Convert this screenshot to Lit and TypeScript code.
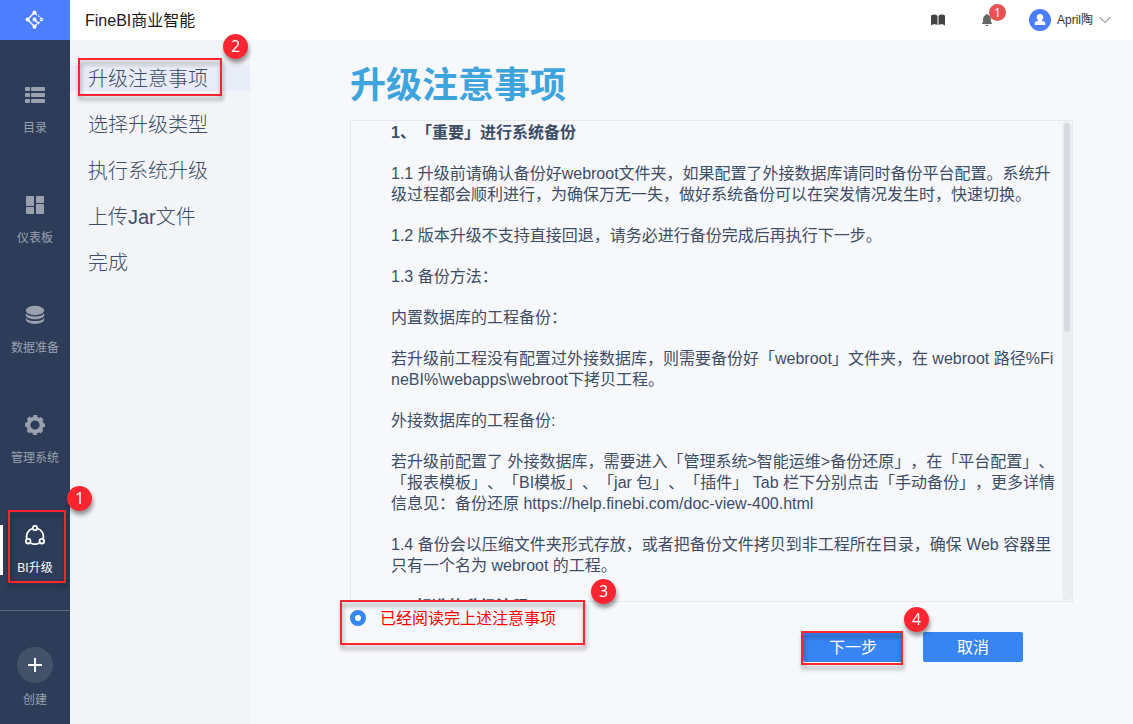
import { LitElement, html, css, svg, nothing } from "lit";
import { customElement, state } from "lit/decorators.js";

const icons = {
  list: svg`<g fill="currentColor"><rect x="0" y="2" width="5" height="4" rx="1"/><rect x="6" y="2" width="14" height="4" rx="1"/><rect x="0" y="8" width="5" height="4" rx="1"/><rect x="6" y="8" width="14" height="4" rx="1"/><rect x="0" y="14" width="5" height="4" rx="1"/><rect x="6" y="14" width="14" height="4" rx="1"/></g>`,
  board: svg`<g fill="currentColor"><rect x="1" y="1" width="8" height="10" rx="1"/><rect x="11" y="1" width="8" height="7" rx="1"/><rect x="1" y="12" width="8" height="7" rx="1"/><rect x="11" y="9" width="8" height="10" rx="1"/></g>`,
  database: svg`<g fill="currentColor"><ellipse cx="10" cy="5.5" rx="9.2" ry="4.7"/><path d="M.8 8.300c1.700 2.200 5 3.200 9.200 3.200s7.500-1 9.200-3.200v1.700c0 2.500-4.100 4.300-9.200 4.300S.8 12.500.8 10z"/><path d="M.8 12.900c1.700 2.200 5 3.200 9.200 3.200s7.500-1 9.200-3.200v1.700c0 2.500-4.100 4.300-9.200 4.300s-9.200-1.800-9.200-4.300z"/></g>`,
  gear: svg`<g fill="none" stroke="currentColor"><circle cx="10" cy="10" r="6.600" stroke-width="4"/><circle cx="10" cy="10" r="8.800" stroke-width="2.400" stroke-dasharray="4 2.910" stroke-dashoffset="2"/></g>`,
  cycle: svg`<g fill="none" stroke="currentColor" stroke-width="1.800"><circle cx="10" cy="3" r="2.200"/><circle cx="3.200" cy="16.200" r="2.300"/><circle cx="16.800" cy="16.200" r="2.300"/><path d="M7.600 3.500A8.400 8.400 0 0 0 1.800 13.500M12.400 3.500a8.400 8.400 0 0 1 5.800 10M6 18.200c2.600 1.200 5.400 1.200 8 0"/></g>`,
};

type Entry = { label: string; icon: keyof typeof icons };

const entries: Entry[] = [
  { label: "目录", icon: "list" },
  { label: "仪表板", icon: "board" },
  { label: "数据准备", icon: "database" },
  { label: "管理系统", icon: "gear" },
  { label: "BI升级", icon: "cycle" },
];

const steps = ["升级注意事项", "选择升级类型", "执行系统升级", "上传Jar文件", "完成"];

const notes = [
  "1.1 升级前请确认备份好webroot文件夹，如果配置了外接数据库请同时备份平台配置。系统升级过程都会顺利进行，为确保万无一失，做好系统备份可以在突发情况发生时，快速切换。",
  "1.2 版本升级不支持直接回退，请务必进行备份完成后再执行下一步。",
  "1.3 备份方法：",
  "内置数据库的工程备份：",
  "若升级前工程没有配置过外接数据库，则需要备份好「webroot」文件夹，在 webroot 路径%FineBI%\\webapps\\webroot下拷贝工程。",
  "外接数据库的工程备份:",
  "若升级前配置了 外接数据库，需要进入「管理系统>智能运维>备份还原」，在「平台配置」、「报表模板」、「BI模板」、「jar 包」、「插件」 Tab 栏下分别点击「手动备份」，更多详情信息见：备份还原 https://help.finebi.com/doc-view-400.html",
  "1.4 备份会以压缩文件夹形式存放，或者把备份文件拷贝到非工程所在目录，确保 Web 容器里只有一个名为 webroot 的工程。",
];

@customElement("step-mark")
export class StepMark extends LitElement {
  static properties = { n: { type: Number } };
  declare n: number;

  static styles = css`
    :host {
      position: absolute;
      box-sizing: border-box;
      border: 2px solid #fd2630;
      filter: drop-shadow(1px 4px 2px rgba(0, 0, 0, 0.4));
      pointer-events: none;
      z-index: 2;
    }
    .num {
      position: absolute;
      left: calc(100% + var(--mark-gap, 3px));
      bottom: calc(100% + var(--mark-rise, 1px));
      width: 25px;
      height: 25px;
      border-radius: 50%;
      background: #fd2630;
      color: #fff;
      font: 16px/25px "Noto Sans", "Liberation Sans", sans-serif;
      text-align: center;
    }
  `;

  render() {
    return html`<span class="num">${this.n}</span>`;
  }
}

@customElement("app-root")
export class AppRoot extends LitElement {
  @state() private entry = 4;
  @state() private step = 0;

  static styles = css`
    :host {
      display: flex;
      flex-direction: column;
      height: 100vh;
      min-height: 720px;
      background: #f7f8fb;
      color: #3d4d66;
      font: 400 16px/21px "Liberation Sans", "Noto Sans CJK SC", sans-serif;
      text-spacing-trim: space-all;
    }
    * {
      box-sizing: border-box;
    }
    button {
      border: 0;
      padding: 0;
      background: none;
      color: inherit;
      font: inherit;
      cursor: pointer;
    }
    svg {
      display: block;
      flex: none;
    }
    .top {
      display: flex;
      align-items: center;
      flex: none;
      height: 40px;
      background: #fff;
      color: #1a1a1a;
    }
    .logo {
      display: grid;
      place-items: center;
      width: 70px;
      height: 40px;
      background: #4b7fff;
    }
    .brand {
      flex: 1;
      padding-left: 15px;
    }
    .tools {
      display: flex;
      align-items: center;
      gap: 35px;
      padding-right: 22px;
      color: #555;
    }
    .bell {
      position: relative;
    }
    .count {
      position: absolute;
      left: 9px;
      bottom: 5px;
      width: 17px;
      height: 17px;
      border-radius: 50%;
      background: #e65251;
      color: #fff;
      font: 12px/17px "Noto Sans", sans-serif;
      text-align: center;
    }
    .user {
      display: flex;
      align-items: center;
      gap: 6px;
      font-size: 12px;
      color: #333;
    }
    .body {
      display: flex;
      flex: 1;
      min-height: 0;
    }
    .rail {
      flex: none;
      width: 70px;
      background: #2d3d59;
      color: #9aa1ae;
      font-size: 12px;
      line-height: 18px;
    }
    .entries {
      padding-bottom: 20px;
      border-bottom: 1px solid #5c687d;
    }
    .cell {
      position: relative;
      height: 110px;
      padding: 45px 0 15px;
    }
    .entry {
      display: flex;
      flex-direction: column;
      align-items: center;
      gap: 14px;
      width: 100%;
      height: 50px;
    }
    .entry.on {
      color: #fff;
      box-shadow: inset 3px 0 #fff;
    }
    .cell step-mark {
      inset: 30px 4px 7px 8px;
    }
    .create {
      display: flex;
      flex-direction: column;
      align-items: center;
      gap: 8px;
      width: 100%;
      padding-top: 36px;
    }
    .plus {
      display: grid;
      place-items: center;
      width: 36px;
      height: 36px;
      border-radius: 50%;
      background: #445269;
      color: #fff;
    }
    .steps {
      display: flex;
      flex-direction: column;
      gap: 20px;
      flex: none;
      width: 180px;
      margin: 0;
      padding: 25px 0 0;
      list-style: none;
      background: #f2f4f8;
      font-size: 20px;
      font-weight: 300;
      line-height: 24px;
    }
    .row {
      position: relative;
    }
    .row step-mark {
      inset: -7px 28px -5px 8px;
    }
    .step {
      display: block;
      width: 100%;
      height: 26px;
      padding: 2px 0 0 18px;
      text-align: left;
    }
    .step.on {
      background: #e8ecf6;
    }
    .main {
      display: flex;
      flex-direction: column;
      flex: 1;
      min-width: 0;
      padding: 22px 60px 62px 100px;
    }
    .title {
      margin: 0 0 10px;
      color: #3ea4dd;
      font-size: 36px;
      line-height: 48px;
      font-weight: 700;
    }
    .panel {
      display: flex;
      flex: 1;
      min-height: 0;
      border: 1px solid #e6e8ec;
    }
    .notes {
      flex: 1;
      overflow-y: auto;
      scrollbar-width: none;
      padding: 1px 0 0 40px;
      word-break: break-all;
    }
    .notes p,
    .notes h2 {
      margin: 0 0 20px;
      font-size: 16px;
    }
    .notes h2 {
      font-weight: 700;
    }
    .track {
      width: 10px;
      padding: 2px;
      border-radius: 5px;
      background: #ebedf1;
    }
    .thumb {
      height: 44%;
      border-radius: 3px;
      background: #d7dae0;
    }
    .agree {
      position: relative;
      display: flex;
      align-items: center;
      padding-top: 5px;
      color: #f00;
    }
    .agree label {
      padding: 1px 0 0 14px;
    }
    .agree input {
      appearance: none;
      width: 16px;
      height: 16px;
      margin: 0;
      border: 5px solid #3685f2;
      border-radius: 50%;
      background: #fff;
    }
    .agree step-mark {
      --mark-gap: 8px;
      --mark-rise: -2px;
      left: -10px;
      top: -2px;
      width: 245px;
      height: 45px;
    }
    .actions {
      display: flex;
      justify-content: flex-end;
      gap: 20px;
      padding: 3px 50px 0 0;
    }
    .act {
      position: relative;
    }
    .act step-mark {
      inset: -1px 0 -3px -2px;
    }
    .btn {
      display: block;
      width: 100px;
      height: 30px;
      border-radius: 2px;
      background: #3685f2;
      color: #fff;
    }
  `;

  render() {
    return html`
      <header class="top">
        <div class="logo">
          <svg width="20" height="20" viewBox="0 0 20 20" fill="none" stroke="#fff" stroke-width="1.500">
            <path d="M9.500 2.500 2.500 9.500M2.500 9.500l7 7M9.500 9.500 14 14M9.500 2.500 12 5M9.500 16.500 12 14" />
            <path d="M13 5.500 17 9.500 12.500 14" stroke-width="1.100" stroke-dasharray="2 1" />
            <g fill="#fff" stroke="none"><circle cx="9.500" cy="2.500" r="2" /><circle cx="2.500" cy="9.500" r="2" /><circle cx="9.500" cy="16.700" r="2" /><circle cx="9.500" cy="9.500" r="2" /></g>
            <circle cx="16.700" cy="9.500" r="1.300" stroke-width="1" />
          </svg>
        </div>
        <div class="brand">FineBI商业智能</div>
        <div class="tools">
          <button aria-label="帮助">
            <svg width="14" height="12" viewBox="0 0 14 12"><path fill="#444" d="M0 1.500C2 .3 5 .3 6.500 1.700V11C5 10 2 10 0 11.500zM14 1.500C12 .3 9 .3 7.500 1.700V11c1.500-1 4.500-1 6.500.5z" /></svg>
          </button>
          <button class="bell" aria-label="消息">
            <svg width="14" height="12" viewBox="0 0 14 12"><path fill="#666" d="M7 0c.6 0 1 .4 1 1 1.900.5 2.900 2 2.900 4v2.500L12.200 10H1.800l1.300-2.500V5c0-2 1-3.500 2.900-4 0-.6.4-1 1-1zM5.500 10.700h3c-.2.800-.8 1.300-1.500 1.300s-1.300-.5-1.500-1.300z" /></svg>
            <span class="count">1</span>
          </button>
          <button class="user">
            <svg width="22" height="22" viewBox="0 0 22 22"><circle cx="11" cy="11" r="11" fill="#4b7fff" /><path fill="#fff" d="M11 5c2 0 3.300 1.400 3.300 3.300 0 1.300-.6 2.500-1.500 3.100v.7c2 .4 3.500 1 3.500 2.400V16H5.700v-1.500c0-1.400 1.500-2 3.500-2.400v-.7c-.9-.6-1.500-1.800-1.500-3.100C7.700 6.400 9 5 11 5z" /></svg>
            <span>April陶</span>
            <svg width="12" height="8" viewBox="0 0 12 8" fill="none" stroke="#aaa89f" stroke-width="1.200"><path d="M.5 1 6 6.500 11.500 1" /></svg>
          </button>
        </div>
      </header>
      <div class="body">
        <nav class="rail">
          <div class="entries">
            ${entries.map(
              (e, i) => html`<div class="cell">
                <button class="entry ${i === this.entry ? "on" : ""}" @click=${() => (this.entry = i)}>
                  <svg width="20" height="20" viewBox="0 0 20 20">${icons[e.icon]}</svg>
                  <span>${e.label}</span>
                </button>
                ${i === 4 ? html`<step-mark .n=${1}></step-mark>` : nothing}
              </div>`
            )}
          </div>
          <button class="create">
            <span class="plus"><svg width="14" height="14" viewBox="0 0 14 14"><path d="M7 0v14M0 7h14" stroke="currentColor" stroke-width="2" /></svg></span>
            <span>创建</span>
          </button>
        </nav>
        <ol class="steps">
          ${steps.map(
            (s, i) => html`<li class="row">
              <button class="step ${i === this.step ? "on" : ""}" @click=${() => (this.step = i)}>${s}</button>
              ${i === 0 ? html`<step-mark .n=${2}></step-mark>` : nothing}
            </li>`
          )}
        </ol>
        <main class="main">
          <h1 class="title">升级注意事项</h1>
          <section class="panel">
            <div class="notes">
              <h2>1、「重要」进行系统备份</h2>
              ${notes.map((t) => html`<p>${t}</p>`)}
              <h2>2、标准的升级流程</h2>
            </div>
            <div class="track"><div class="thumb"></div></div>
          </section>
          <div class="agree">
            <input type="radio" id="agree" checked />
            <label for="agree">已经阅读完上述注意事项</label>
            <step-mark .n=${3}></step-mark>
          </div>
          <div class="actions">
            <div class="act">
              <button class="btn">下一步</button>
              <step-mark .n=${4}></step-mark>
            </div>
            <button class="btn">取消</button>
          </div>
        </main>
      </div>
    `;
  }
}
